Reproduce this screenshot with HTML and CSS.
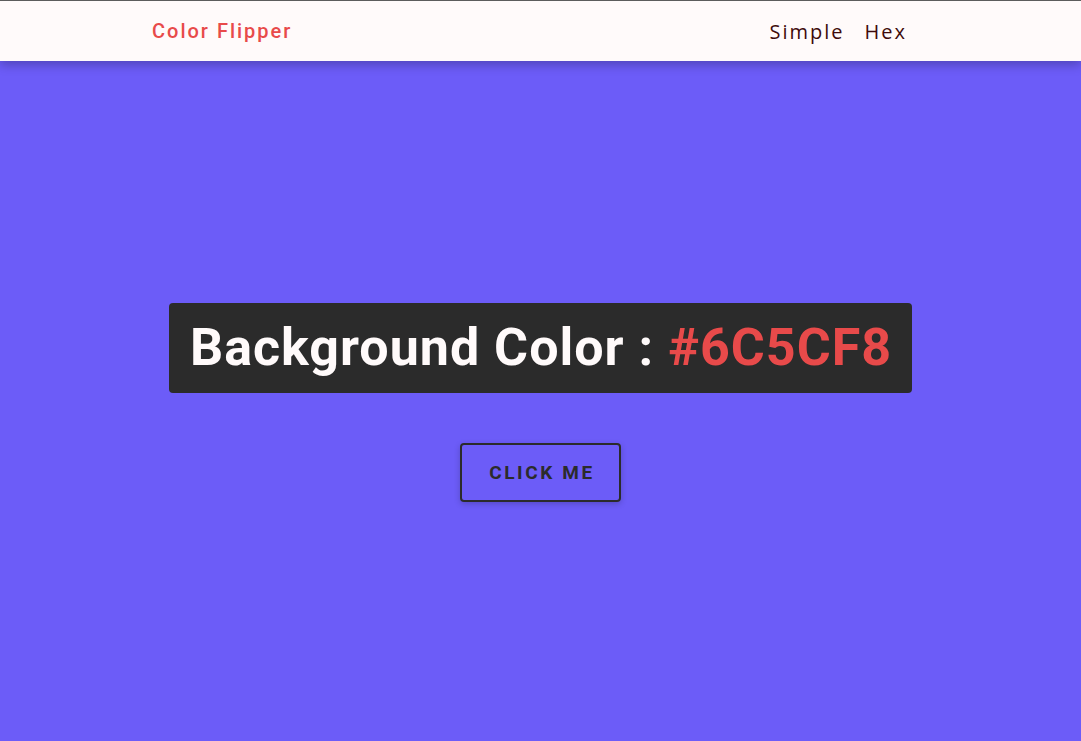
FILE: index.html
```html
<!DOCTYPE html>
<html lang="en">
<head>
<meta charset="utf-8">
<title>Color Flipper</title>
<link rel="stylesheet" href="styles.css">
</head>
<body>
<nav class="nav">
  <div class="nav-center">
    <h4 class="logo">Color Flipper</h4>
    <ul class="nav-links">
      <li><a href="#">Simple</a></li>
      <li><a href="#">Hex</a></li>
    </ul>
  </div>
</nav>
<main class="main">
  <div class="container">
    <h2 class="title">Background Color : <span class="color">#6C5CF8</span></h2>
    <button class="btn" type="button">click me</button>
  </div>
</main>
</body>
</html>
```

FILE: styles.css
```css
* { box-sizing: border-box; margin: 0; padding: 0; }

html, body { height: 100%; }

body {
  font-family: Roboto, "Open Sans", sans-serif;
  background: #6c5cf8;
  display: flex;
  flex-direction: column;
}

.nav {
  height: 61px;
  background: #fffafa;
  border-top: 1px solid #5c5c5c;
  box-shadow: 0 4px 10px rgba(0, 0, 0, 0.25);
  position: relative;
  z-index: 1;
  flex-shrink: 0;
}

.nav-center {
  height: 100%;
  padding: 0 174px 0 152px;
  display: flex;
  align-items: center;
  justify-content: space-between;
}

.logo {
  font-family: Roboto, sans-serif;
  font-size: 20px;
  font-weight: 500;
  letter-spacing: 2px;
  color: #e84a4a;
}

.nav-links {
  list-style: none;
  display: flex;
  gap: 20px;
}

.nav-links a {
  text-decoration: none;
  font-family: "Open Sans", sans-serif;
  font-size: 20px;
  letter-spacing: 2px;
  color: #3e0a0a;
}

.main {
  flex: 1;
  display: flex;
  align-items: center;
  justify-content: center;
}

.container {
  display: flex;
  flex-direction: column;
  align-items: center;
  margin-top: 3px;
}

.title {
  background: #2b2b2b;
  color: #fffafa;
  font-size: 52px;
  font-weight: 700;
  letter-spacing: 1px;
  line-height: 62px;
  padding: 14px 20px 14px 21px;
  border-radius: 4px;
}

.color { color: #e84a4a; }

.btn {
  margin-top: 50px;
  background: transparent;
  border: 2px solid #2b2b2b;
  border-radius: 4px;
  padding: 16px 24px 16px 27px;
  font-family: Roboto, sans-serif;
  font-size: 19px;
  font-weight: 700;
  letter-spacing: 2.6px;
  text-transform: uppercase;
  color: #2b2b2b;
  box-shadow: 0 2px 6px rgba(0, 0, 0, 0.2);
  cursor: pointer;
}
```
